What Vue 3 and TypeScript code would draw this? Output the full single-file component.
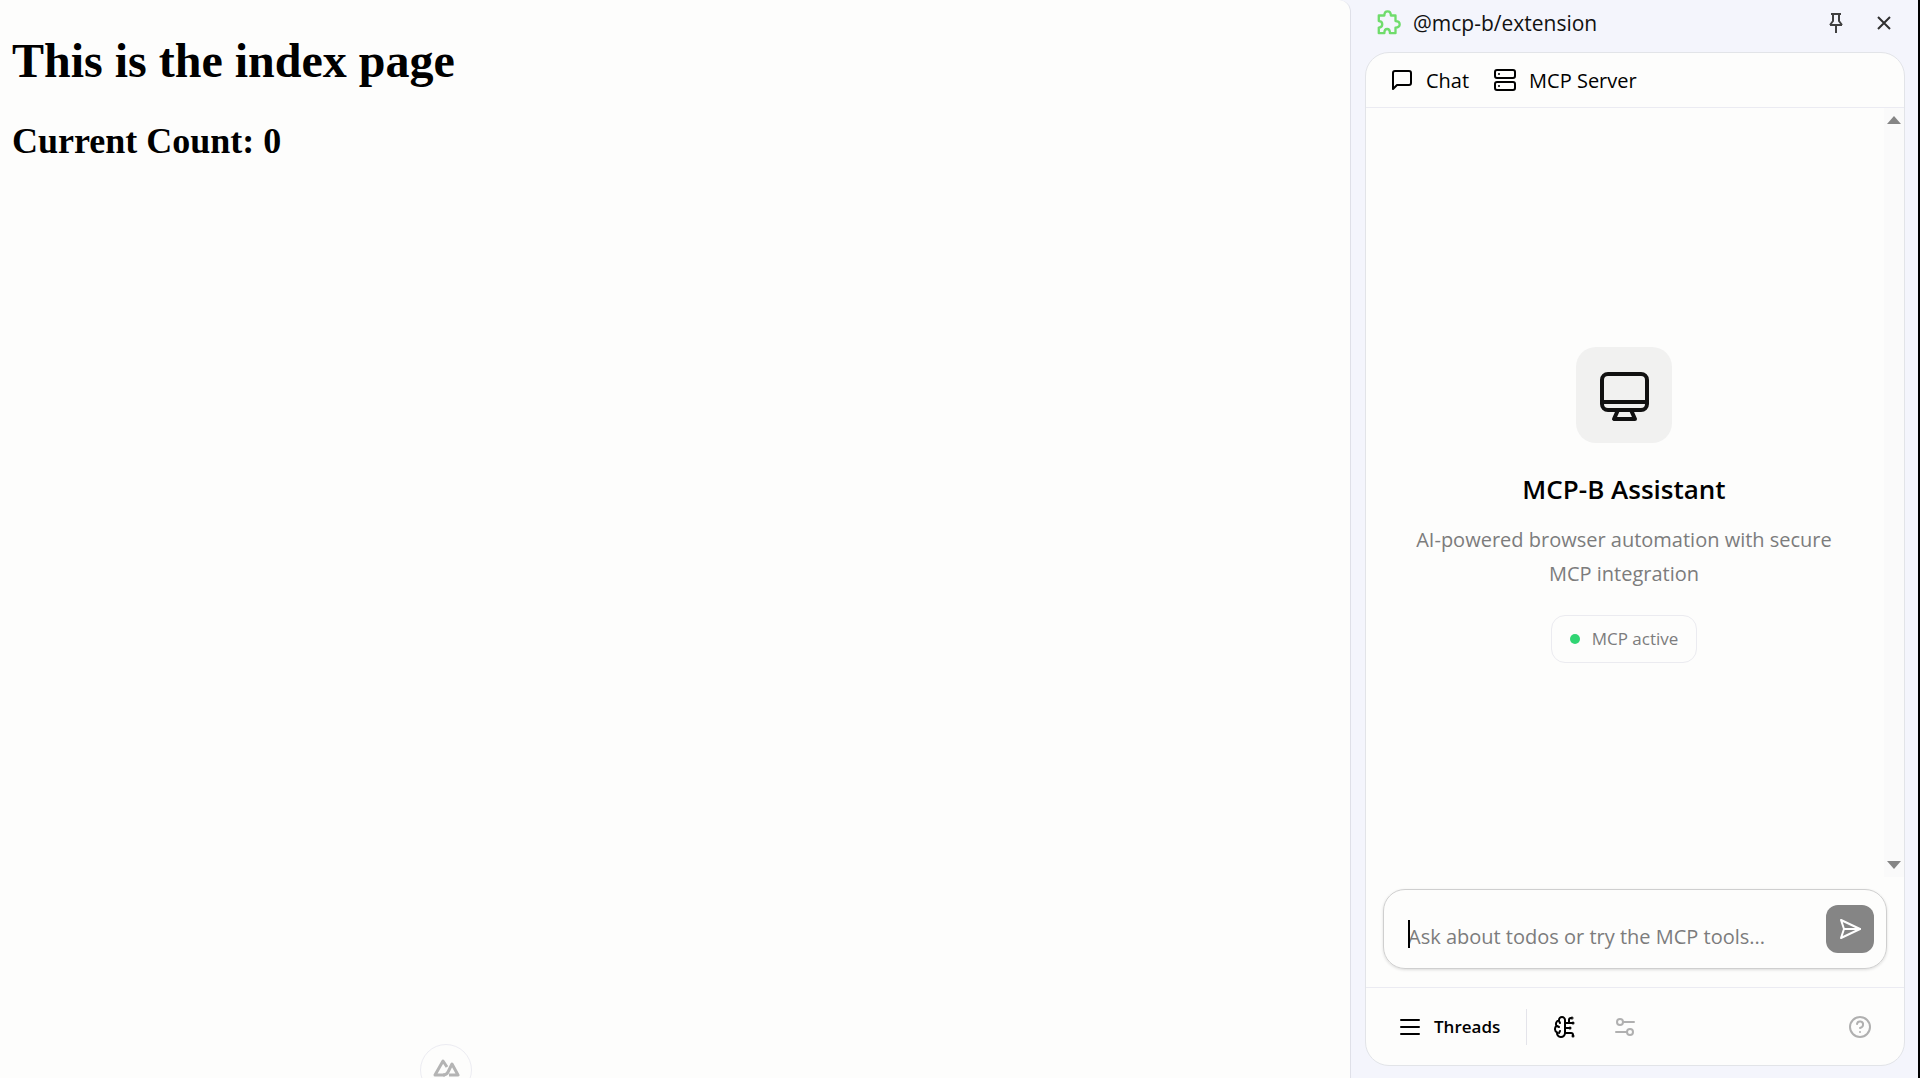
<script setup lang="ts">
import { ref } from 'vue'

const count = ref<number>(0)
const message = ref<string>('')
</script>

<template>
  <div class="window">
    <main class="page">
      <h1>This is the index page</h1>
      <h2>Current Count: {{ count }}</h2>
      <button class="devtools" type="button" aria-label="Toggle devtools">
        <svg width="28" height="20" viewBox="0 0 28 20" fill="none" stroke="#b4b4b4" stroke-width="3" stroke-linejoin="round">
          <path d="M13 17H3L11 3l4 6" />
          <path d="M11 17c3 0 4-1 5-3l4-8 6 11h-9" />
        </svg>
      </button>
    </main>

    <aside class="panel">
      <header class="panel-head">
        <svg class="puzzle" width="28" height="28" viewBox="0 0 28 28" fill="none" stroke="#6fdc6b" stroke-width="2.500" stroke-linejoin="round">
          <path d="M3 7h6C9 1 16 1 16 7h5v6c6 0 6 7 0 7v6h-6c0-6-6-6-6 0H3v-6c5 0 5-7 0-7z" />
        </svg>
        <span class="panel-title">@mcp-b/extension</span>
        <button class="icon-btn" type="button" aria-label="Pin">
          <svg width="20" height="20" viewBox="0 0 20 20" fill="none" stroke="#404040" stroke-width="2">
            <path d="M5 1h10M7 1v7l-3 4M13 1v7l3 4M4 12h12M10 12v8" />
          </svg>
        </button>
        <button class="icon-btn" type="button" aria-label="Close">
          <svg width="20" height="20" viewBox="0 0 20 20" fill="none" stroke="#303030" stroke-width="2">
            <path d="M4 4l12 12M16 4L4 16" />
          </svg>
        </button>
      </header>

      <section class="card">
        <nav class="tabs">
          <button class="tab" type="button">
            <svg class="line" width="24" height="24" viewBox="0 0 24 24">
              <path d="M21 15a2 2 0 0 1-2 2H7l-4 4V5a2 2 0 0 1 2-2h14a2 2 0 0 1 2 2z" />
            </svg>
            Chat
          </button>
          <button class="tab" type="button">
            <svg class="line" width="24" height="24" viewBox="0 0 24 24">
              <rect x="2" y="2" width="20" height="8" rx="2" />
              <rect x="2" y="14" width="20" height="8" rx="2" />
              <path d="M6 6h.01M6 18h.01" />
            </svg>
            MCP Server
          </button>
        </nav>

        <div class="thread">
          <div class="welcome">
            <div class="logo">
              <svg class="monitor" width="56" height="56" viewBox="0 0 56 56">
                <rect x="6" y="7" width="45" height="36" rx="6" />
                <path d="M6 35h45M22 43l-4 9h21l-4-9" />
              </svg>
            </div>
            <h3>MCP-B Assistant</h3>
            <p>AI-powered browser automation with secure MCP integration</p>
            <div class="status"><span class="dot"></span>MCP active</div>
          </div>
          <div class="scrollbar">
            <span class="arrow up"></span>
            <span class="arrow down"></span>
          </div>
        </div>

        <form class="composer" @submit.prevent>
          <div class="field">
            <span class="caret"></span>
            <input v-model="message" type="text" aria-label="Message" placeholder="Ask about todos or try the MCP tools..." />
          </div>
          <button class="send" type="submit" aria-label="Send">
            <svg width="24" height="24" viewBox="0 0 24 24" fill="none" stroke="#fff" stroke-width="2" stroke-linejoin="round" stroke-linecap="round">
              <path d="M3 3l3 9-3 9 19-9z" />
              <path d="M6 12h16" />
            </svg>
          </button>
        </form>

        <footer class="toolbar">
          <button class="threads" type="button">
            <svg class="line" width="24" height="24" viewBox="0 0 24 24">
              <path d="M3 5h18M3 12h18M3 19h18" />
            </svg>
            Threads
          </button>
          <span class="divider"></span>
          <button class="tool" type="button" aria-label="Reasoning">
            <svg class="line brain" width="24" height="24" viewBox="0 0 24 24">
              <path d="M12 5a3 3 0 1 0-5.997.125 4 4 0 0 0-2.526 5.770 4 4 0 0 0 .556 6.588A4 4 0 1 0 12 18z" />
              <path d="M6 6l1 2M4 11l2 1M6 18l1-2M12 13h5M12 18h6a2 2 0 0 1 2 2v1M12 8h8M16 8V5a2 2 0 0 1 2-2" />
              <circle cx="17" cy="13" r=".5" /><circle cx="19" cy="3" r=".5" />
              <circle cx="20" cy="21" r=".5" /><circle cx="20" cy="8" r=".5" />
            </svg>
          </button>
          <button class="tool muted" type="button" aria-label="Tool settings">
            <svg class="line" width="24" height="24" viewBox="0 0 24 24">
              <path d="M10 7h11M3 17h11" />
              <circle cx="7" cy="7" r="3" /><circle cx="17" cy="17" r="3" />
            </svg>
          </button>
          <button class="tool muted help" type="button" aria-label="Help">
            <svg class="line" width="24" height="24" viewBox="0 0 24 24">
              <circle cx="12" cy="12" r="10" />
              <path d="M9 9a3 3 0 0 1 6 1c0 2-3 3-3 3M12 17h.01" />
            </svg>
          </button>
        </footer>
      </section>
    </aside>
  </div>
</template>

<style>
body {
  margin: 0;
  background: #f4f5fc;
}
</style>

<style scoped>
* {
  box-sizing: border-box;
}
.window {
  display: flex;
  height: 100vh;
  overflow: hidden;
  border-right: 2px solid #000;
  font-family: "Open Sans", "Noto Sans", sans-serif;
  color: #111;
}
button {
  display: flex;
  align-items: center;
  justify-content: center;
  padding: 0;
  border: 0;
  background: none;
  color: inherit;
  font: inherit;
}
svg {
  flex: none;
}
.line,
.monitor {
  fill: none;
  stroke: currentColor;
  stroke-width: 2;
  stroke-linecap: round;
  stroke-linejoin: round;
}
.monitor {
  stroke-width: 4;
}
.page {
  position: relative;
  flex: 1;
  padding: 0 12px;
  border-right: 1px solid #dfe0e8;
  border-top-right-radius: 12px;
  background: #fdfdfc;
  color: #000;
  font-family: "Liberation Serif", serif;
}
h1 {
  margin: 33px 0 32px;
  font-size: 48px;
  line-height: 56px;
}
h2 {
  margin: 0;
  font-size: 36px;
  line-height: 40px;
}
.devtools {
  position: absolute;
  left: 420px;
  bottom: -18px;
  width: 52px;
  height: 52px;
  padding-bottom: 4px;
  border: 1px solid #ececf2;
  border-radius: 26px;
}
.panel {
  display: flex;
  flex-direction: column;
  width: 567px;
  padding: 0 13px 12px 14px;
}
.panel-head {
  display: flex;
  align-items: center;
  height: 52px;
  padding: 0 9px 6px 10px;
  font-size: 21px;
}
.puzzle {
  padding-bottom: 2px;
}
.panel-title {
  flex: 1;
  margin-left: 10px;
}
.icon-btn {
  width: 24px;
  height: 24px;
  margin-left: 24px;
}
.card {
  display: flex;
  flex: 1;
  flex-direction: column;
  overflow: hidden;
  border: 1px solid #e2e4e8;
  border-radius: 24px;
  background: #fdfdfc;
}
.tabs {
  display: flex;
  gap: 24px;
  height: 55px;
  padding: 0 24px;
  border-bottom: 1px solid #ebebf2;
  font-size: 20px;
  font-weight: 500;
  color: #000;
}
.tab {
  gap: 12px;
}
.thread {
  display: flex;
  flex: 1;
}
.welcome {
  display: flex;
  flex: 1;
  flex-direction: column;
  align-items: center;
  justify-content: center;
  padding: 24px 50px 0 48px;
  text-align: center;
}
.logo {
  display: flex;
  align-items: center;
  justify-content: center;
  width: 96px;
  height: 96px;
  border-radius: 20px;
  background: #f1f1f0;
}
h3 {
  margin: 28px 0 16px;
  color: #000;
  font-size: 26px;
  font-weight: 600;
  line-height: 36px;
}
p {
  margin: 0 0 24px;
  color: #7c7c7c;
  font-size: 20px;
  line-height: 34px;
}
.status {
  display: flex;
  align-items: center;
  gap: 12px;
  height: 48px;
  padding: 0 18px;
  border: 1px solid #ebebf0;
  border-radius: 14px;
  color: #7c7c7c;
  font-size: 17px;
}
.dot {
  width: 10px;
  height: 10px;
  border-radius: 5px;
  background: #30d573;
}
.scrollbar {
  display: flex;
  flex-direction: column;
  align-items: center;
  justify-content: space-between;
  width: 20px;
  padding: 8px 0;
  background: #fafafa;
}
.arrow {
  border: 7px solid transparent;
}
.up {
  border-top: 0;
  border-bottom: 8px solid #858585;
}
.down {
  border-bottom: 0;
  border-top: 8px solid #858585;
}
.composer {
  display: flex;
  align-items: center;
  height: 80px;
  margin: 12px 17px 18px;
  padding: 0 12px 0 24px;
  border: 1px solid #cfcfcf;
  border-radius: 22px;
  box-shadow: 0 1px 3px #00000022;
}
.field {
  position: relative;
  flex: 1;
  padding-top: 14px;
}
.caret {
  position: absolute;
  top: 12px;
  left: 0;
  width: 2px;
  height: 28px;
  background: #000;
}
input {
  width: 100%;
  height: 28px;
  padding: 0;
  border: 0;
  outline: 0;
  background: none;
  color: inherit;
  font: inherit;
  font-size: 20px;
}
input::placeholder {
  color: #7c7c7c;
  opacity: 1;
}
.send {
  width: 48px;
  height: 48px;
  border-radius: 12px;
  background: #858585;
}
.toolbar {
  display: flex;
  align-items: center;
  height: 78px;
  padding: 0 32px;
  border-top: 1px solid #ebebf2;
}
.threads {
  gap: 12px;
  color: #000;
  font-size: 17px;
  font-weight: 600;
}
.divider {
  width: 1px;
  height: 36px;
  margin: 0 26px;
  background: #e4e4ea;
}
.tool {
  margin-right: 36px;
}
.brain {
  color: #000;
}
.muted {
  color: #b0b0b0;
}
.help {
  margin-right: 0;
  margin-left: auto;
}
</style>
